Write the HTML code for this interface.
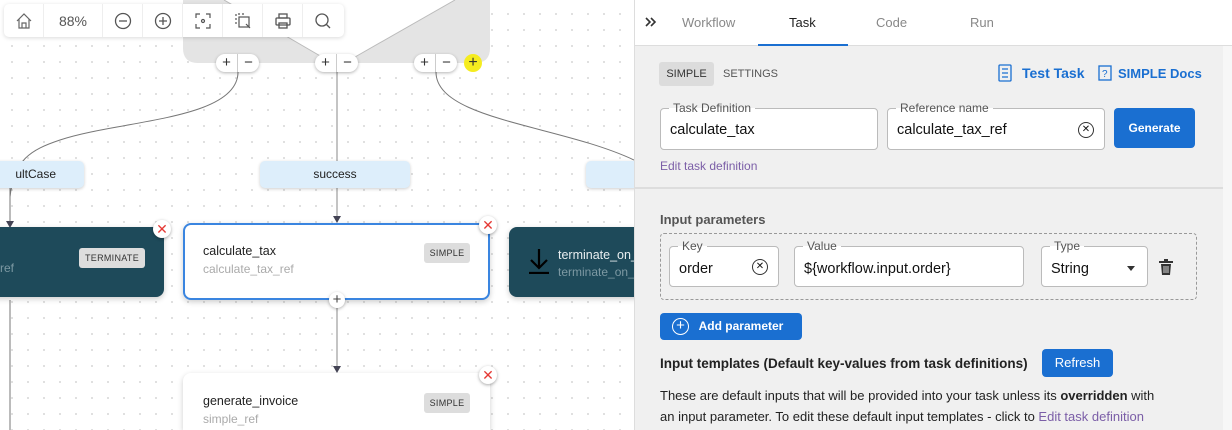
<!DOCTYPE html>
<html><head><meta charset="utf-8"><style>
*{box-sizing:border-box;margin:0;padding:0}
html,body{width:1232px;height:430px;overflow:hidden}
body{font-family:"Liberation Sans",sans-serif;position:relative;background:#fff}
.canvas{position:absolute;left:0;top:0;width:634px;height:430px;background-color:#fff;background-image:radial-gradient(circle,#d0d0d0 0.7px,transparent 1.1px);background-size:16px 16px;background-position:4px 6px;overflow:hidden}
.abs{position:absolute}
.tb{left:4px;top:4px;width:340px;height:33px;background:#fff;border-radius:5px;box-shadow:0 1px 4px rgba(0,0,0,.15);display:flex}
.tb div{width:40px;height:33px;border-right:1px solid #eee;display:flex;align-items:center;justify-content:center;color:#555;font-size:14px}
.pill{height:18px;width:43px;background:#fff;border-radius:9px;box-shadow:0 1px 3px rgba(0,0,0,.3);display:flex;font-size:15px;color:#333;line-height:17px;top:54px}
.pill span{flex:1;text-align:center}
.pill span:first-child{border-right:1px solid #ccc}
.lab{background:#ddeefb;border-radius:5px;height:27px;top:161px;box-shadow:0 1px 3px rgba(0,0,0,.2);font-size:12px;text-align:center;line-height:27px;color:#222}
.node{border-radius:8px;box-shadow:0 2px 6px rgba(0,0,0,.2)}
.chip{background:#ddd;border-radius:3px;font-size:9px;color:#333;text-align:center;letter-spacing:.3px}
.rx{width:18px;height:18px;border-radius:50%;background:#fff;box-shadow:0 1px 3px rgba(0,0,0,.35);color:#e53935;font-size:14px;text-align:center;line-height:18px}
.panel{position:absolute;left:634px;top:0;width:598px;height:430px;background:#f0f0f0;border-left:1px solid #ddd;overflow:hidden}
.tabs{height:46px;background:#fff;border-bottom:1px solid #ddd;position:relative;font-size:13px;color:#888}
.tabs span{position:absolute;top:15px}
.fld{position:absolute;border:1px solid #bbb;border-radius:4px;background:#fff;font-size:14.5px;color:#111;padding-left:9px}
.fld .lg{position:absolute;top:-8px;left:8px;background:linear-gradient(#f0f0f0 50%,#fff 50%);padding:0 4px;font-size:12px;color:#555;line-height:14px}
.btn{position:absolute;background:#1a6fd1;color:#fff;border-radius:4px;font-size:12px;font-weight:bold;text-align:center}
</style></head><body>
<div class="canvas">
<svg class="abs" style="left:0;top:0" width="634" height="430">
<path d="M183 0 H490 V48 Q490 63 475 63 H198 Q183 63 183 48 Z" fill="#e4e4e4"/>
<polygon points="224,0 322,57 355,57 455,0" fill="#fff"/>
<path d="M224 0 L322 57 M455 0 L355 57" stroke="#bbb" fill="none"/>
<path d="M238 72 C238 120 120 120 60 140 C30 150 14 160 10 197" stroke="#777" fill="none"/>
<path d="M337 72 V222" stroke="#888" fill="none"/>
<path d="M436 72 C436 120 560 125 634 160" stroke="#777" fill="none"/>
<path d="M10 188 V227 M10 300 V430" stroke="#777" fill="none"/>
<path d="M337 308 V372" stroke="#888" fill="none"/>
<path d="M333 216 L341 216 L337 223 Z M333 366 L341 366 L337 373 Z M6 221 L14 221 L10 228 Z" fill="#445"/>
</svg>
<div class="abs tb">
<div><svg width="18" height="18" viewBox="0 0 18 18" fill="none" stroke="#666" stroke-width="1.2"><path d="M2 9 L9 2 L16 9 M4 7 V16 H14 V7 M7 16 V11 H11 V16"/></svg></div>
<div style="width:59px;font-size:14px">88%</div>
<div><svg width="18" height="18" fill="none" stroke="#555" stroke-width="1.3"><circle cx="9" cy="9" r="7.5"/><path d="M5 9H13"/></svg></div>
<div><svg width="18" height="18" fill="none" stroke="#555" stroke-width="1.3"><circle cx="9" cy="9" r="7.5"/><path d="M5 9H13M9 5V13"/></svg></div>
<div><svg width="18" height="18" fill="none" stroke="#555" stroke-width="1.2"><path d="M2 6V2H6M12 2H16V6M16 12V16H12M6 16H2V12"/><circle cx="9" cy="9" r="1.5"/></svg></div>
<div><svg width="18" height="18" fill="none" stroke="#555" stroke-width="1.2"><path d="M2 12V2H12" stroke-dasharray="2 2"/><rect x="5" y="5" width="10" height="10"/><path d="M12 12L16 16"/></svg></div>
<div><svg width="18" height="18" fill="none" stroke="#555" stroke-width="1.3"><rect x="5" y="2" width="8" height="4"/><rect x="2" y="6" width="14" height="7" rx="1"/><rect x="5" y="11" width="8" height="5"/></svg></div>
<div style="border:none"><svg width="18" height="18" fill="none" stroke="#555" stroke-width="1.3"><circle cx="8" cy="8" r="6"/><path d="M12.5 12.5L16 16"/></svg></div>
</div>
<div class="abs pill" style="left:216px"><span>+</span><span>−</span></div>
<div class="abs pill" style="left:315px"><span>+</span><span>−</span></div>
<div class="abs pill" style="left:414px"><span>+</span><span>−</span></div>
<div class="abs" style="left:464px;top:54px;width:18px;height:18px;border-radius:50%;background:#f5ec1f;text-align:center;line-height:17px;font-size:16px;color:#333">+</div>
<div class="abs lab" style="left:-70px;width:154px;text-align:right;padding-right:28px">ultCase</div>
<div class="abs lab" style="left:260px;width:150px">success</div>
<div class="abs lab" style="left:586px;width:100px"></div>
<div class="abs node" style="left:-20px;top:227px;width:184px;height:70px;background:#1e4a5a"></div>
<div class="abs" style="left:0;top:261px;color:#7d99a3;font-size:12px">ref</div>
<div class="abs chip" style="left:79px;top:248px;width:66px;height:20px;line-height:20px">TERMINATE</div>
<div class="abs node" style="left:183px;top:223px;width:307px;height:77px;background:#fff;border:2px solid #3a85e0"></div>
<div class="abs" style="left:203px;top:244px;font-size:12.5px;color:#222">calculate_tax</div>
<div class="abs" style="left:203px;top:262px;font-size:12px;color:#aaa">calculate_tax_ref</div>
<div class="abs chip" style="left:424px;top:243px;width:46px;height:20px;line-height:20px">SIMPLE</div>
<div class="abs node" style="left:509px;top:227px;width:160px;height:70px;background:#1e4a5a"></div>
<svg class="abs" style="left:527px;top:248px" width="24" height="26" fill="none" stroke="#000" stroke-width="2.2"><path d="M12 1V20M4 12L12 20L20 12M2 25H22"/></svg>
<div class="abs" style="left:558px;top:248px;font-size:12.5px;color:#e8eef0">terminate_on_</div>
<div class="abs" style="left:558px;top:265px;font-size:12px;color:#7d99a3">terminate_on_</div>
<div class="abs node" style="left:183px;top:373px;width:307px;height:57px;background:#fff;border-bottom-left-radius:0;border-bottom-right-radius:0"></div>
<div class="abs" style="left:203px;top:394px;font-size:12.5px;color:#222">generate_invoice</div>
<div class="abs" style="left:203px;top:412px;font-size:12px;color:#aaa">simple_ref</div>
<div class="abs chip" style="left:424px;top:393px;width:46px;height:20px;line-height:20px">SIMPLE</div>
<div class="abs rx" style="left:153px;top:220px">✕</div>
<div class="abs rx" style="left:479px;top:216px">✕</div>
<div class="abs rx" style="left:479px;top:366px">✕</div>
<div class="abs" style="left:329px;top:292px;width:16px;height:16px;border-radius:50%;background:#fff;box-shadow:0 1px 3px rgba(0,0,0,.3);text-align:center;line-height:15px;font-size:15px;color:#444">+</div>
</div>
<div class="panel">
<div class="tabs">
<svg style="position:absolute;left:10px;top:17px" width="12" height="10" fill="none" stroke="#333" stroke-width="1.6"><path d="M1 1L5 5L1 9M6 1L10 5L6 9"/></svg>
<span style="left:47px">Workflow</span>
<span style="left:154px;color:#222">Task</span>
<span style="left:241px">Code</span>
<span style="left:335px">Run</span>
<div style="position:absolute;left:123px;top:44px;width:90px;height:2px;background:#1a6fd1"></div>
</div>
<div class="abs" style="left:24px;top:62px;width:55px;height:24px;background:#dcdcdc;border-radius:3px;font-size:11px;line-height:24px;text-align:center;color:#333">SIMPLE</div>
<div class="abs" style="left:88px;top:68px;font-size:11px;color:#555">SETTINGS</div>
<svg class="abs" style="left:363px;top:64px" width="16" height="18" fill="none" stroke="#1a6fd1" stroke-width="1.3"><rect x="1" y="1" width="12" height="16" rx="1"/><path d="M4 5H10M4 9H10M4 13H10"/></svg>
<div class="abs" style="left:387px;top:65px;font-size:14px;font-weight:bold;color:#1a6fd1">Test Task</div>
<svg class="abs" style="left:463px;top:65px" width="14" height="16" fill="none" stroke="#1a6fd1" stroke-width="1.3"><rect x="1" y="1" width="12" height="14"/><text x="4" y="12" font-size="10" fill="#1a6fd1" stroke="none" font-family="Liberation Sans">?</text></svg>
<div class="abs" style="left:483px;top:66px;font-size:13px;font-weight:bold;color:#1a6fd1">SIMPLE Docs</div>
<div class="fld" style="left:25px;top:108px;width:218px;height:42px;line-height:42px"><span class="lg">Task Definition</span>calculate_tax</div>
<div class="fld" style="left:252px;top:108px;width:218px;height:42px;line-height:42px"><span class="lg">Reference name</span>calculate_tax_ref<span style="position:absolute;right:10px;top:13px;width:16px;height:16px;border:1.5px solid #333;border-radius:50%;font-size:10px;line-height:13px;text-align:center">✕</span></div>
<div class="btn" style="left:479px;top:108px;width:81px;height:40px;line-height:40px">Generate</div>
<div class="abs" style="left:25px;top:159px;font-size:12px;color:#7b5ea7">Edit task definition</div>
<div class="abs" style="left:0;top:187px;width:588px;height:2px;background:#ddd"></div>
<div class="abs" style="left:588px;top:46px;width:10px;height:384px;background:#f7f7f7"></div>
<div class="abs" style="left:25px;top:212px;font-size:13px;font-weight:bold;color:#555">Input parameters</div>
<div class="abs" style="left:25px;top:233px;width:537px;height:67px;border:1px dashed #999;border-radius:4px"></div>
<div class="fld" style="left:34px;top:246px;width:110px;height:41px;line-height:45px"><span class="lg">Key</span>order<span style="position:absolute;right:10px;top:12px;width:16px;height:16px;border:1.5px solid #333;border-radius:50%;font-size:10px;line-height:13px;text-align:center">✕</span></div>
<div class="fld" style="left:159px;top:246px;width:230px;height:41px;line-height:45px"><span class="lg">Value</span>${workflow.input.order}</div>
<div class="fld" style="left:406px;top:246px;width:107px;height:41px;line-height:45px"><span class="lg">Type</span>String<span style="position:absolute;right:12px;top:19px;border:4px solid transparent;border-top:5px solid #333"></span></div>
<svg class="abs" style="left:524px;top:259px" width="14" height="16" fill="#333"><rect x="0" y="2" width="14" height="2"/><rect x="5" y="0" width="4" height="2"/><path d="M2 5H12L11 16H3Z"/><path d="M5 7V14M7 7V14M9 7V14" stroke="#fff" stroke-width=".8"/></svg>
<div class="btn" style="left:25px;top:313px;width:142px;height:27px;line-height:27px;padding-left:20px"><span style="position:absolute;left:12px;top:5px;width:17px;height:17px;border:1.5px solid #fff;border-radius:50%;line-height:14px;font-size:15px;font-weight:normal">+</span>Add parameter</div>
<div class="abs" style="left:25px;top:356px;font-size:13.5px;font-weight:bold;color:#222">Input templates (Default key-values from task definitions)</div>
<div class="btn" style="left:407px;top:349px;width:71px;height:28px;line-height:28px;font-weight:normal;font-size:13px">Refresh</div>
<div class="abs" style="left:25px;top:385px;font-size:13px;color:#222;line-height:21px;width:565px;white-space:nowrap">These are default inputs that will be provided into your task unless its <b>overridden</b> with<br>an input parameter. To edit these default input templates - click to <span style="color:#7b5ea7">Edit task definition</span></div>
</div>
</body></html>
